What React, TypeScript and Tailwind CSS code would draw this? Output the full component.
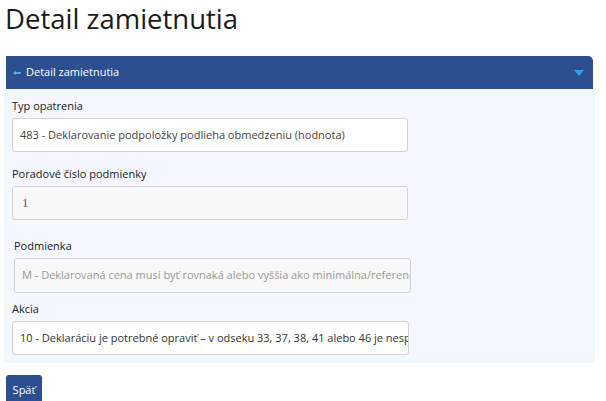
import React from 'react';

const font = { fontFamily: '"Open Sans", "Noto Sans", sans-serif' };

function Field({
  label,
  value,
  className = '',
  inputClass = '',
}: {
  label: string;
  value: string;
  className?: string;
  inputClass?: string;
}) {
  return (
    <div className={className}>
      <div className="text-[11px] leading-[18px] text-[#222]">{label}</div>
      <div
        className={`mt-[3px] h-[34px] border border-[#d4d4d4] rounded-[3px] px-[7px] flex items-center whitespace-nowrap overflow-hidden ${inputClass}`}
      >
        {value}
      </div>
    </div>
  );
}

export default function App() {
  return (
    <div className="w-[606px] h-[401px] bg-white overflow-hidden" style={font}>
      <h1 className="pl-[5px] pt-[1px] text-[27.5px] leading-[36px] text-[#1a1a1a] font-normal">
        Detail zamietnutia
      </h1>

      <div className="mt-[19px] ml-[4px] w-[591px]">
        {/* Panel header */}
        <div className="mx-[2px] h-[33px] bg-[#2e4e92] rounded-tr-[5px] flex items-center justify-between pl-[7px] pr-[6px]">
          <div className="flex items-center gap-[5px] text-white text-[11px]">
            <svg width="8" height="6" viewBox="0 0 8 6">
              <path d="M1 3h7" stroke="#4fc3f7" strokeWidth="1.6" />
              <path d="M2.5 1.2L0.8 3l1.7 1.8" stroke="#4fc3f7" strokeWidth="1" fill="none" />
            </svg>
            <span>Detail zamietnutia</span>
          </div>
          <svg width="10" height="6" viewBox="0 0 10 6" className="mr-[3px]">
            <path d="M0 0h10L5 6z" fill="#29a8e6" />
          </svg>
        </div>

        {/* Panel body */}
        <div className="bg-[#f4f7fd] px-[8px] pt-[8px] pb-[8px] rounded-b-[4px]">
          <Field
            label="Typ opatrenia"
            value="483 - Deklarovanie podpoložky podlieha obmedzeniu (hodnota)"
            className="w-[396px]"
            inputClass="bg-white text-[#444] text-[11px]"
          />
          <Field
            label="Poradové číslo podmienky"
            value="1"
            className="mt-[13px] w-[396px]"
            inputClass="bg-[#f8f8f8] text-[#6b5a48] text-[13px] pl-[9px] [font-family:'Liberation_Serif',serif]"
          />
          <Field
            label="Podmienka"
            value="M - Deklarovaná cena musí byť rovnaká alebo vyššia ako minimálna/referenčná cena"
            className="mt-[17px] ml-[2px] w-[397px]"
            inputClass="bg-[#f8f8f8] text-[#9a9a9a] text-[11px] !h-[35px]"
          />
          <Field
            label="Akcia"
            value="10 - Deklaráciu je potrebné opraviť – v odseku 33, 37, 38, 41 alebo 46 je nesprávny údaj"
            className="mt-[7px] w-[397px]"
            inputClass="bg-white text-[#333] text-[11px]"
          />
        </div>
      </div>

      <button className="mt-[12px] ml-[6px] h-[30px] w-[36px] bg-[#2e4e92] text-white text-[11px] rounded-t-[3px]">
        Späť
      </button>
    </div>
  );
}
